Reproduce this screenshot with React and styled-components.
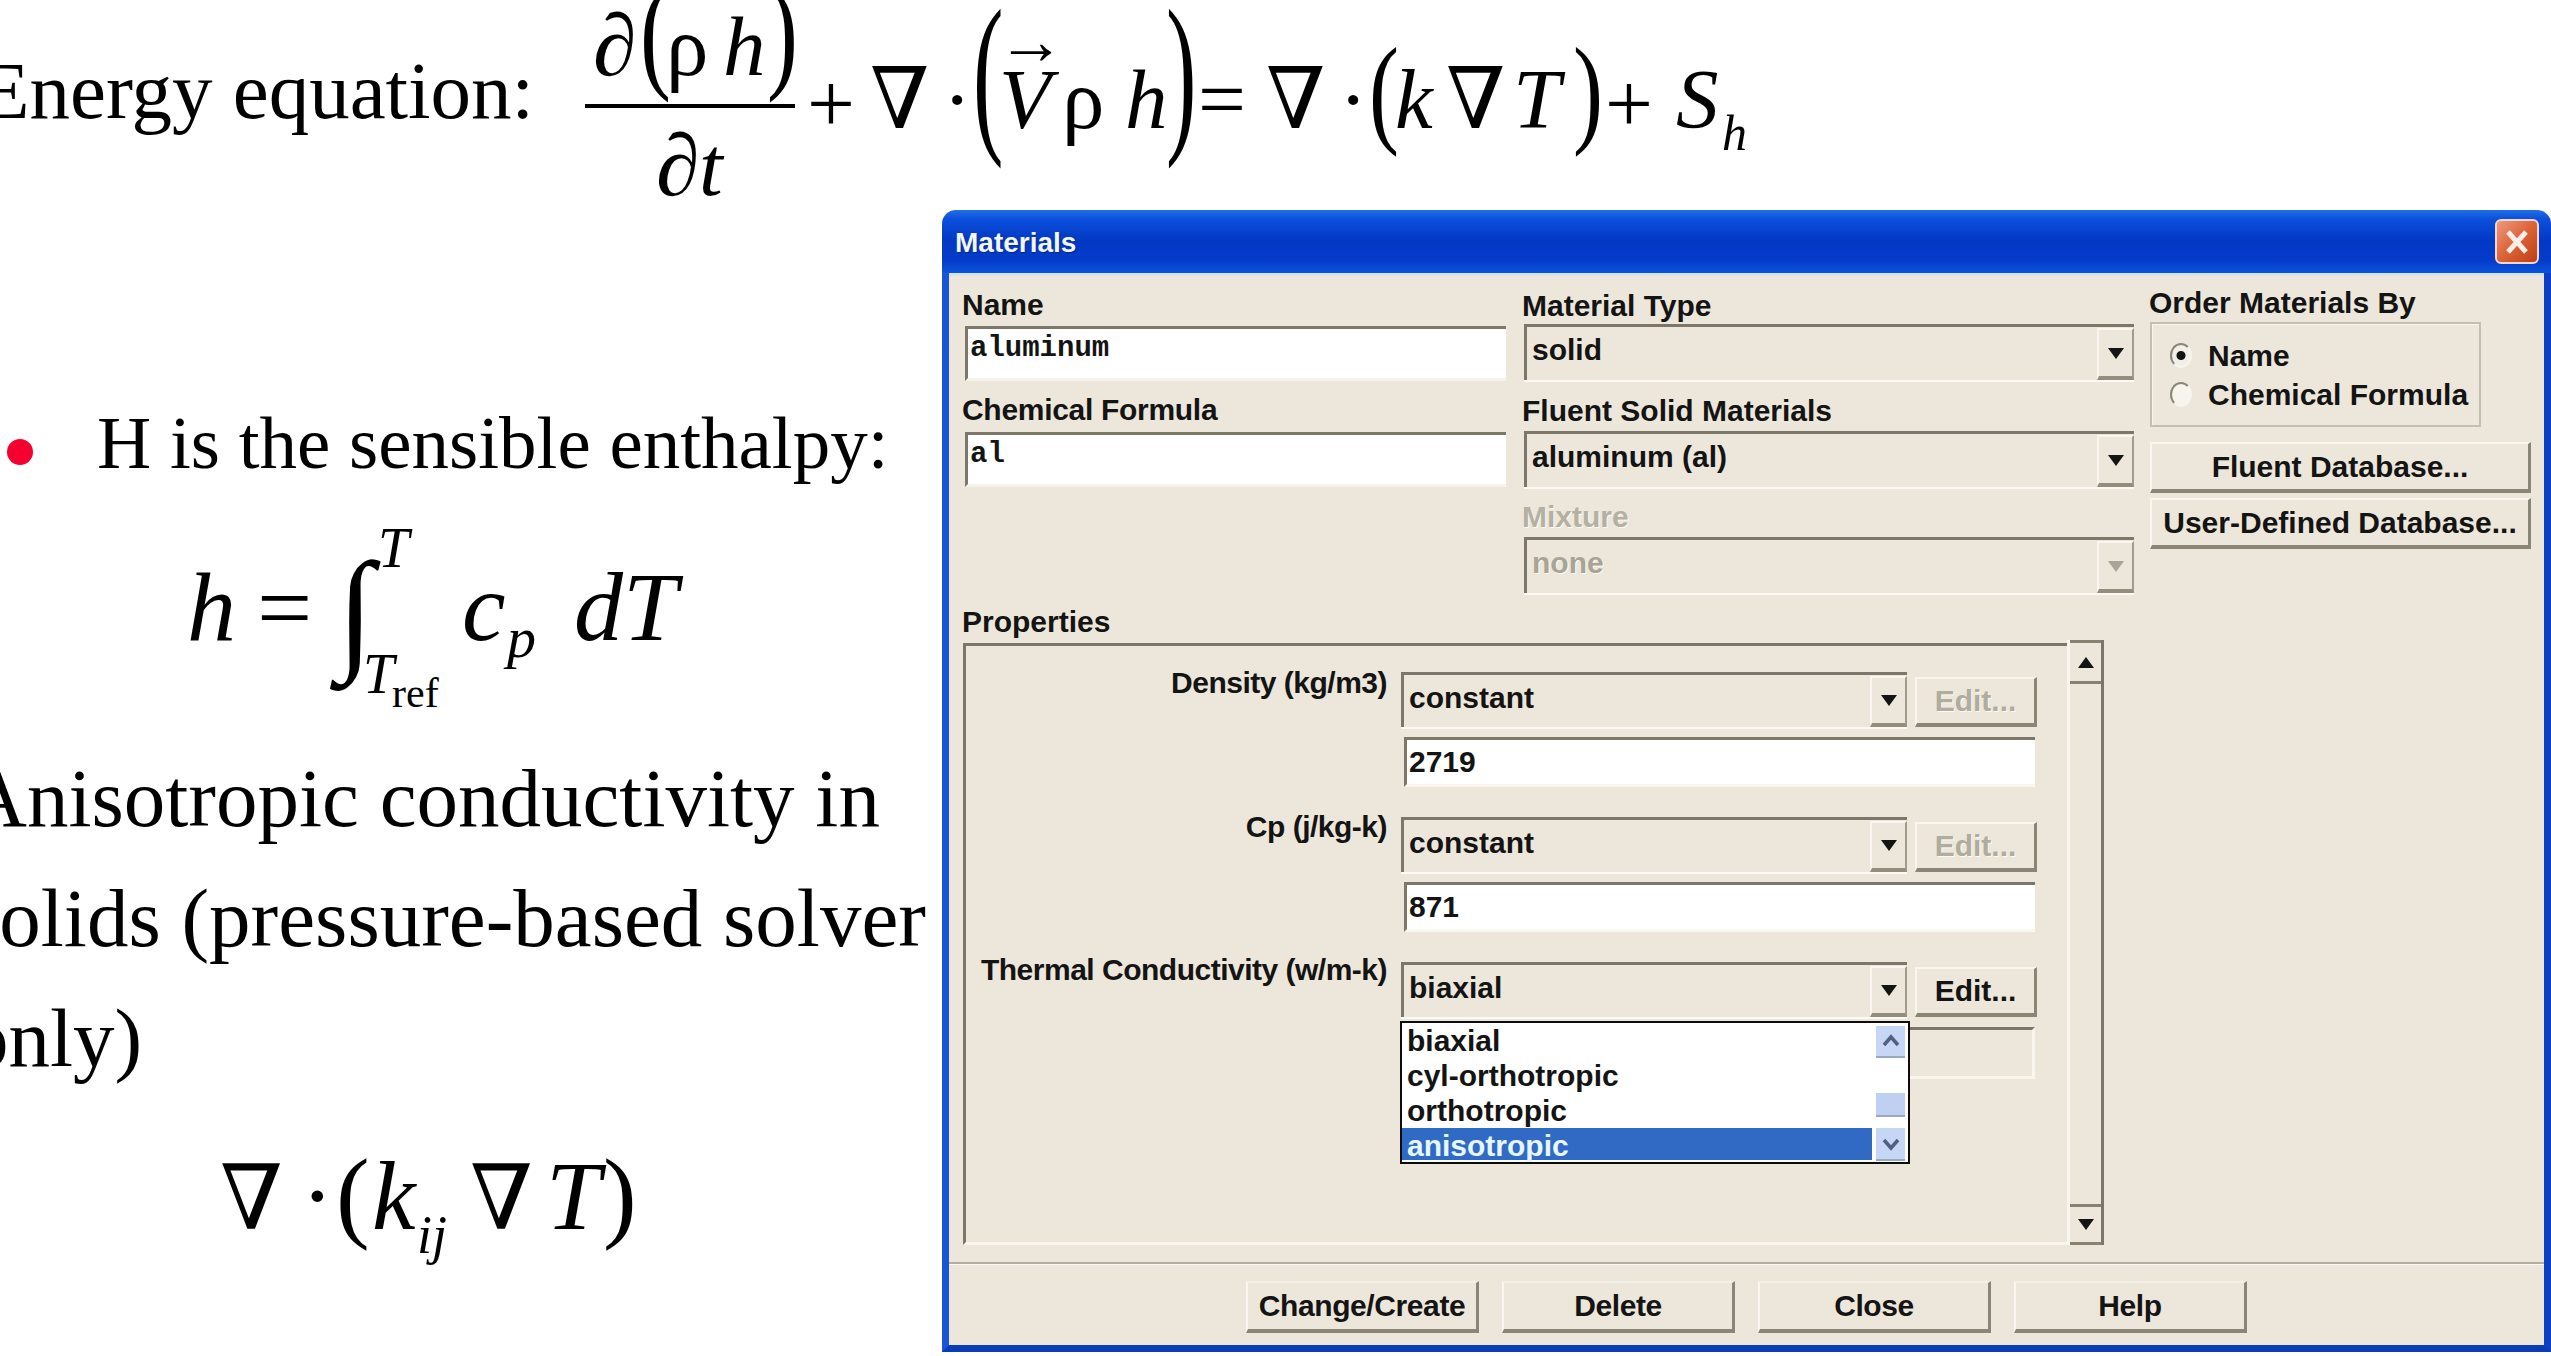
import React from "react";
import styled, { createGlobalStyle } from "styled-components";

const GlobalStyle = createGlobalStyle`
  html, body { margin: 0; padding: 0; background: #fff; }
  * { box-sizing: border-box; }
`;

// one line of math: pieces sit on a shared baseline, x given in page coordinates
const Formula = ({ origin = 0, h, b, width, items }) => (
  <FormulaLine $h={h} $b={b} $width={width}>
    {items.map((it, i) => {
      const next = items[i + 1];
      return (
        <Piece
          key={i}
          $ml={i === 0 ? it.x - origin : 0}
          $w={next ? next.x - it.x : it.w || 80}
          $s={it.s}
          $i={it.i}
          $bold={it.bold}
          $va={it.va || 0}
          $sx={it.sx || 1}
          $nabla={it.t === "∇"}
        >
          {it.t}
        </Piece>
      );
    })}
  </FormulaLine>
);

const numerator = [
  { t: "∂", x: 593, s: 88 },
  { t: "(", x: 640, s: 129, sx: 0.72 },
  { t: "ρ", x: 666, s: 85 },
  { t: "h", x: 723, s: 85, i: true },
  { t: ")", x: 767, s: 129, sx: 0.72 },
];
const denominator = [
  { t: "∂", x: 656, s: 88 },
  { t: "t", x: 699, s: 85, i: true },
];
const mainTerms = [
  { t: "+", x: 807, s: 85, va: -4 },
  { t: "∇", x: 870, s: 85 },
  { t: "·", x: 943, s: 85 },
  { t: "(", x: 973, s: 176, sx: 0.52, va: -3 },
  { t: "→", x: 997, s: 68, va: 64 },
  { t: "V", x: 999, s: 85, i: true },
  { t: "ρ", x: 1062, s: 85 },
  { t: "h", x: 1125, s: 85, i: true },
  { t: ")", x: 1166, s: 176, sx: 0.52, va: -3 },
  { t: "=", x: 1198, s: 85 },
  { t: "∇", x: 1266, s: 85 },
  { t: "·", x: 1339, s: 85 },
  { t: "(", x: 1369, s: 120, sx: 0.75, va: -3 },
  { t: "k", x: 1395, s: 85, i: true },
  { t: "∇", x: 1446, s: 85 },
  { t: "T", x: 1513, s: 85, i: true },
  { t: ")", x: 1573, s: 120, sx: 0.75, va: -3 },
  { t: "+", x: 1605, s: 85, va: -4 },
  { t: "S", x: 1676, s: 85, i: true },
  { t: "h", x: 1722, s: 50, i: true, va: -22 },
];
const enthalpy = [
  { t: "h", x: 187, s: 98, i: true },
  { t: "=", x: 257, s: 98 },
  { t: "∫", x: 337, s: 134, va: -15, bold: true },
  { t: "T", x: 363, s: 56, i: true, va: -53 },
  { t: "T", x: 378, s: 56, i: true, va: 73 },
  { t: "ref", x: 392, s: 42, va: -67 },
  { t: "c", x: 462, s: 98, i: true },
  { t: "p", x: 507, s: 58, i: true, va: -17 },
  { t: "d", x: 574, s: 98, i: true },
  { t: "T", x: 623, s: 98, i: true },
];
const anisotropic = [
  { t: "∇", x: 220, s: 90 },
  { t: "·", x: 301, s: 98 },
  { t: "(", x: 336, s: 101 },
  { t: "k", x: 372, s: 98, i: true },
  { t: "ij", x: 417, s: 54, i: true, va: -24 },
  { t: "∇", x: 470, s: 90 },
  { t: "T", x: 546, s: 98, i: true },
  { t: ")", x: 603, s: 101 },
];

const Arrow = ({ up, muted }) => (
  <svg width="16" height="11" viewBox="0 0 16 11">
    <polygon points={up ? "8,0 16,11 0,11" : "0,0 16,0 8,11"} fill={muted ? "#a8a596" : "#141414"} />
  </svg>
);

const Chevron = ({ up }) => (
  <svg width="18" height="14" viewBox="0 0 18 14">
    <polyline
      points={up ? "2,11 9,3 16,11" : "2,3 9,11 16,3"}
      fill="none"
      stroke="#4d6185"
      strokeWidth="3.5"
    />
  </svg>
);

const Select = ({ value, muted, dense }) => (
  <SelectBox $dense={dense}>
    <SelectValue $muted={muted}>{value}</SelectValue>
    <SelectButton>
      <Arrow muted={muted} />
    </SelectButton>
  </SelectBox>
);

const App = () => (
  <Page>
    <GlobalStyle />
    <TopRow>
      <Formula h={210} b={118} width={585} items={[{ t: "Energy equation:", x: -20, s: 81, w: 600 }]} />
      <Fraction>
        <Formula origin={585} h={104} b={75} items={numerator} />
        <FractionBar />
        <Formula origin={585} h={100} b={87} items={denominator} />
      </Fraction>
      <Formula origin={807} h={210} b={128} items={mainTerms} />
    </TopRow>

    <BottomRow>
      <LeftColumn>
        <BulletRow>
          <Bullet />
          <BulletText>H is the sensible enthalpy:</BulletText>
        </BulletRow>
        <Formula h={250} b={152} items={enthalpy} />
        <Paragraph>
          Anisotropic conductivity in
          <br />
          solids (pressure-based solver
          <br />
          only)
        </Paragraph>
        <Formula h={150} b={131} items={anisotropic} />
      </LeftColumn>

      <Dialog>
        <TitleBar>
          <TitleText>Materials</TitleText>
          <CloseButton>
            <svg width="26" height="26" viewBox="0 0 26 26">
              <path d="M4 3 L22 23 M22 3 L4 23" stroke="#fbeee8" strokeWidth="5" />
            </svg>
          </CloseButton>
        </TitleBar>

        <Body>
          <TopSection>
            <NameColumn>
              <Label>Name</Label>
              <TextField>aluminum</TextField>
              <Label $top={11} $tight>Chemical Formula</Label>
              <TextField $top={4}>al</TextField>
            </NameColumn>
            <TypeColumn>
              <Label $left={-2}>Material Type</Label>
              <Select value="solid" />
              <Label $left={-2} $top={13}>Fluent Solid Materials</Label>
              <SelectGap>
                <Select value="aluminum (al)" />
              </SelectGap>
              <Label $left={-2} $top={12} $muted>Mixture</Label>
              <SelectGap>
                <Select value="none" muted />
              </SelectGap>
            </TypeColumn>
            <OrderColumn>
              <Label $left={-1} $height={37}>Order Materials By</Label>
              <RadioGroup>
                <RadioRow>
                  <Radio $checked />
                  <span>Name</span>
                </RadioRow>
                <RadioRow>
                  <Radio />
                  <span>Chemical Formula</span>
                </RadioRow>
              </RadioGroup>
              <SideButton $top={15}>Fluent Database...</SideButton>
              <SideButton $top={5}>User-Defined Database...</SideButton>
            </OrderColumn>
          </TopSection>

          <Label $top={5} $left={13} $height={39}>Properties</Label>
          <PropertiesRow>
            <PropertiesPanel>
              <PropertyRow>
                <PropertyLabel $shift={-7}>Density (kg/m3)</PropertyLabel>
                <Select value="constant" dense />
                <EditButton $disabled>Edit...</EditButton>
              </PropertyRow>
              <ValueField>2719</ValueField>
              <PropertyRow $top={30}>
                <PropertyLabel $shift={-8}>Cp (j/kg-k)</PropertyLabel>
                <Select value="constant" dense />
                <EditButton $disabled>Edit...</EditButton>
              </PropertyRow>
              <ValueField>871</ValueField>
              <PropertyRow $top={30}>
                <PropertyLabel $shift={-10}>Thermal Conductivity (w/m-k)</PropertyLabel>
                <Select value="biaxial" dense />
                <EditButton>Edit...</EditButton>
              </PropertyRow>
              <ValueField $off />

              <DropList>
                <DropItems>
                  <DropItem>biaxial</DropItem>
                  <DropItem>cyl-orthotropic</DropItem>
                  <DropItem>orthotropic</DropItem>
                  <DropItem $selected>anisotropic</DropItem>
                </DropItems>
                <DropScroll>
                  <DropScrollButton $h={32}>
                    <Chevron up />
                  </DropScrollButton>
                  <DropThumb />
                  <DropScrollButton $h={33}>
                    <Chevron />
                  </DropScrollButton>
                </DropScroll>
              </DropList>
            </PropertiesPanel>
            <PanelScroll>
              <PanelScrollButton $h={44}>
                <Arrow up />
              </PanelScrollButton>
              <PanelScrollButton $h={41}>
                <Arrow />
              </PanelScrollButton>
            </PanelScroll>
          </PropertiesRow>

          <Footer>
            <FooterButton>Change/Create</FooterButton>
            <FooterButton>Delete</FooterButton>
            <FooterButton>Close</FooterButton>
            <FooterButton>Help</FooterButton>
          </Footer>
        </Body>
      </Dialog>
    </BottomRow>
  </Page>
);

const Page = styled.div`
  width: 2551px;
  height: 1356px;
  overflow: hidden;
  display: flex;
  flex-direction: column;
  background: #fff;
  color: #000;
  font-family: "Liberation Serif", "Times New Roman", serif;
`;

const TopRow = styled.div`
  display: flex;
  height: 210px;
  flex: none;
`;

const FormulaLine = styled.div`
  height: ${(p) => p.$h}px;
  ${(p) => p.$width && `width: ${p.$width}px; flex: none;`}
  font-size: 0;
  line-height: 0;
  white-space: nowrap;
  &::before {
    content: "";
    display: inline-block;
    height: ${(p) => p.$b}px;
  }
`;

const Piece = styled.span`
  display: inline-block;
  width: ${(p) => p.$w}px;
  margin-left: ${(p) => p.$ml}px;
  font-size: ${(p) => p.$s}px;
  font-style: ${(p) => (p.$i ? "italic" : "normal")};
  font-weight: ${(p) => (p.$bold ? 700 : 400)};
  ${(p) => p.$nabla && `font-family: "DejaVu Serif", "Liberation Serif", serif;`}
  vertical-align: ${(p) => p.$va}px;
  transform: scaleX(${(p) => p.$sx});
  transform-origin: left center;
`;

const Fraction = styled.div`
  display: flex;
  flex-direction: column;
  width: 222px;
  flex: none;
`;

const FractionBar = styled.div`
  width: 210px;
  height: 4px;
  background: #000;
`;

const BottomRow = styled.div`
  display: flex;
  flex: none;
  height: 1142px;
`;

const LeftColumn = styled.div`
  width: 942px;
  flex: none;
  padding-top: 188px;
`;

const BulletRow = styled.div`
  display: flex;
  align-items: flex-start;
  height: 90px;
  padding-left: 7px;
`;

const Bullet = styled.div`
  width: 26px;
  height: 26px;
  margin-top: 41px;
  margin-right: 64px;
  border-radius: 50%;
  background: #f5002f;
  flex: none;
`;

const BulletText = styled.div`
  font-size: 75px;
  line-height: 90px;
  white-space: nowrap;
`;

const Paragraph = styled.div`
  margin-left: -33px;
  font-size: 83px;
  line-height: 120px;
  white-space: nowrap;
`;

const Dialog = styled.div`
  flex: 1;
  display: flex;
  flex-direction: column;
  font-family: "Liberation Sans", Arial, sans-serif;
  font-size: 30px;
  font-weight: 700;
  color: #141414;
`;

const TitleBar = styled.div`
  height: 63px;
  flex: none;
  display: flex;
  align-items: center;
  justify-content: space-between;
  padding: 0 12px 0 13px;
  border-radius: 14px 14px 0 0;
  background: linear-gradient(180deg, #1f6fe6 0%, #0b50dc 14%, #0338c4 48%, #043bc9 80%, #0a55dc 100%);
`;

const TitleText = styled.div`
  font-size: 28px;
  color: #f2f6ff;
  text-shadow: 1px 1px 1px #0a2a80;
  padding-top: 2px;
`;

const CloseButton = styled.div`
  width: 44px;
  height: 45px;
  display: flex;
  align-items: center;
  justify-content: center;
  border: 2px solid #f0d8cc;
  border-radius: 6px;
  background: linear-gradient(135deg, #ec9a7c 0%, #dd6238 50%, #bd3f16 100%);
`;

const Body = styled.div`
  flex: 1;
  display: flex;
  flex-direction: column;
  background: #ece7da;
  border-left: 7px solid #1a55d8;
  border-right: 7px solid #0b3fc4;
  border-bottom: 7px solid #0a3cb8;
  box-shadow: inset 0 3px 0 #d6e3f3;
`;

const TopSection = styled.div`
  height: 326px;
  flex: none;
  display: flex;
  padding-left: 16px;
  padding-top: 14px;
`;

const NameColumn = styled.div`
  width: 541px;
  flex: none;
`;

const TypeColumn = styled.div`
  width: 610px;
  flex: none;
  margin-left: 18px;
  padding-top: 1px;
  margin-right: 16px;
`;

const OrderColumn = styled.div`
  width: 381px;
  flex: none;
  margin-top: -2px;
`;

const Label = styled.div`
  height: ${(p) => p.$height || 36}px;
  line-height: 36px;
  white-space: nowrap;
  margin-top: ${(p) => p.$top || 0}px;
  margin-left: ${(p) => p.$left ?? -3}px;
  ${(p) => p.$tight && "letter-spacing: -0.3px;"}
  ${(p) => p.$muted && "color: #b4b0a2; text-shadow: 1px 1px 0 #fbfaf6;"}
`;

const TextField = styled.div`
  height: 55px;
  margin-top: ${(p) => p.$top ?? 3}px;
  padding: 2px 0 0 2px;
  line-height: 36px;
  background: #fff;
  border-top: 3px solid #7c7768;
  border-left: 3px solid #7c7768;
  border-bottom: 3px solid #f6f3ea;
  font-family: "Liberation Mono", "Courier New", monospace;
  font-size: 29px;
`;

const SelectGap = styled.div`
  margin-top: 2px;
`;

const SelectBox = styled.div`
  height: ${(p) => (p.$dense ? 55 : 56)}px;
  display: flex;
  justify-content: space-between;
  padding-left: 5px;
  border-top: 3px solid #7c7768;
  border-left: 3px solid #7c7768;
  line-height: 36px;
  box-shadow: 0 2px 0 #fbfaf4;
`;

const SelectValue = styled.div`
  padding-top: 5px;
  ${(p) => p.$muted && "color: #a8a596; text-shadow: 1px 1px 0 #fbfaf6;"}
`;

const SelectButton = styled.div`
  width: 37px;
  margin-top: 1px;
  display: flex;
  align-items: center;
  justify-content: center;
  border-top: 2px solid #f8f6ef;
  border-left: 2px solid #f8f6ef;
  border-right: 2px solid #a09b8a;
  border-bottom: 4px solid #928d7c;
`;

const RadioGroup = styled.div`
  width: 331px;
  height: 105px;
  padding-top: 12px;
  border: 2px solid #c4c0ae;
  box-shadow: inset 1px 1px 0 #f7f5ee;
`;

const RadioRow = styled.div`
  display: flex;
  align-items: center;
  height: 39px;
  padding-left: 18px;
  gap: 16px;
  font-size: 30px;
  white-space: nowrap;
`;

const Radio = styled.div`
  width: 22px;
  height: 25px;
  border-radius: 50%;
  background: ${(p) =>
    p.$checked
      ? "radial-gradient(circle at 50% 50%, #141414 0 4px, #f1efe7 5px)"
      : "#f6f4ed"};
  border-top: 2px solid #8a8575;
  border-left: 2px solid #8a8575;
  border-right: 2px solid #f6f4ed;
  border-bottom: 2px solid #f6f4ed;
`;

const raised = `
  display: flex;
  align-items: center;
  justify-content: center;
  white-space: nowrap;
  border-top: 2px solid #f8f6ef;
  border-left: 2px solid #f8f6ef;
  border-right: 3px solid #8a8575;
  border-bottom: 4px solid #8a8575;
`;

const SideButton = styled.div`
  ${raised}
  height: 51px;
  margin-top: ${(p) => p.$top}px;
`;

const PropertiesRow = styled.div`
  height: 602px;
  flex: none;
  display: flex;
  margin: 0 0 0 14px;
`;

const PropertiesPanel = styled.div`
  position: relative;
  width: 1104px;
  flex: none;
  padding-top: 26px;
  border-top: 3px solid #7c7768;
  border-left: 3px solid #7c7768;
  border-bottom: 3px solid #f8f6ef;
`;

const PropertyRow = styled.div`
  display: grid;
  grid-template-columns: 435px 506px 130px;
  height: 55px;
  margin-top: ${(p) => p.$top || 0}px;
`;

const PropertyLabel = styled.div`
  line-height: 36px;
  text-align: right;
  margin-top: ${(p) => p.$shift}px;
  margin-right: 14px;
  letter-spacing: -0.5px;
  white-space: nowrap;
`;

const EditButton = styled.div`
  ${raised}
  height: 50px;
  margin: 5px 0 0 8px;
  ${(p) => p.$disabled && "color: #b0ac9e; text-shadow: 1px 1px 0 #fbfaf6;"}
`;

const ValueField = styled.div`
  margin: 10px 0 0 438px;
  width: 631px;
  height: ${(p) => (p.$off ? 52 : 50)}px;
  line-height: 36px;
  padding: 4px 0 0 2px;
  border-top: 3px solid #7c7768;
  border-left: 3px solid #7c7768;
  border-bottom: 3px solid #f8f6ef;
  background: ${(p) => (p.$off ? "transparent" : "#fff")};
  ${(p) => p.$off && "border-right: 3px solid #f8f6ef;"}
`;

const DropList = styled.div`
  position: absolute;
  left: 434px;
  top: 375px;
  width: 510px;
  height: 143px;
  display: flex;
  background: #fff;
  border: 2px solid #0c0c0c;
`;

const DropItems = styled.div`
  flex: 1;
`;

const DropItem = styled.div`
  height: 35px;
  line-height: 35px;
  padding-left: 5px;
  ${(p) => p.$selected && "background: #316ac5; color: #e6f7ff; height: 32px;"}
`;

const DropScroll = styled.div`
  width: 36px;
  padding: 3px 3px 3px 4px;
  display: flex;
  flex-direction: column;
`;

const DropScrollButton = styled.div`
  height: ${(p) => p.$h}px;
  display: flex;
  align-items: center;
  justify-content: center;
  background: #c6d6f5;
  border-bottom: 2px solid #9ba8c4;
  flex: none;
`;

const DropThumb = styled.div`
  height: 24px;
  margin: 35px 0 11px;
  background: #c0d0f2;
  border-bottom: 2px solid #9ba8c4;
  flex: none;
`;

const PanelScroll = styled.div`
  width: 37px;
  flex: none;
  margin-top: -3px;
  display: flex;
  flex-direction: column;
  justify-content: space-between;
  border-left: 3px solid #f8f6ef;
  border-right: 3px solid #7c7768;
`;

const PanelScrollButton = styled.div`
  height: ${(p) => p.$h}px;
  display: flex;
  align-items: center;
  justify-content: center;
  border-top: 3px solid #87826f;
  border-bottom: 3px solid #87826f;
`;

const Footer = styled.div`
  flex: 1;
  display: flex;
  justify-content: center;
  gap: 23px;
  margin-top: 17px;
  padding-top: 17px;
  border-top: 2px solid #b3afa0;
  box-shadow: inset 0 1px 0 #fbfaf6;
`;

const FooterButton = styled.div`
  ${raised}
  width: 233px;
  height: 52px;
  letter-spacing: -0.4px;
  border-top-color: #f3f0e7;
`;

export default App;
